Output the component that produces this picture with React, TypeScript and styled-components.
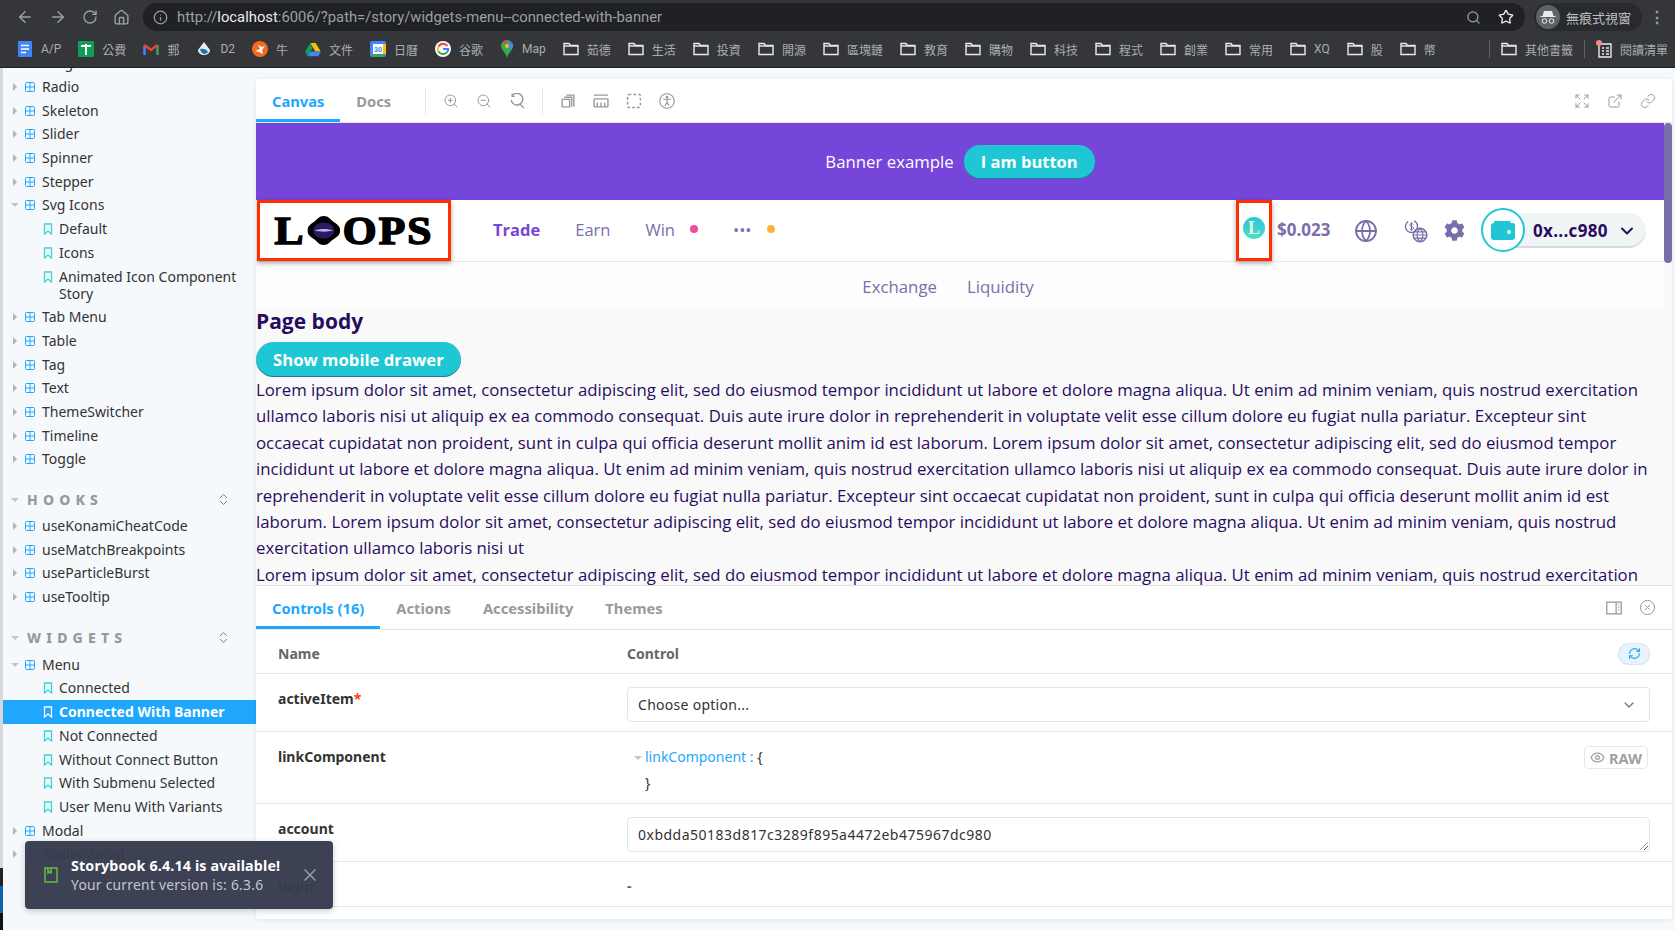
import React from 'react';
import styled, { createGlobalStyle } from 'styled-components';
import {
  ArrowLeft,
  ArrowRight,
  ChevronDown,
  ChevronsUpDown,
  CircleX,
  Expand,
  ExternalLink,
  Eye,
  Globe,
  Home,
  Info,
  Link as LinkIcon,
  RefreshCw,
  RotateCw,
  Search,
  Star,
  X,
  ZoomIn,
  ZoomOut,
} from 'lucide-react';
import { FaCog } from 'react-icons/fa';

const UI_FONT = `'Noto Sans', 'Open Sans', sans-serif`;
const PAGE_FONT = `'Open Sans', 'Noto Sans', sans-serif`;

const GlobalStyle = createGlobalStyle`
  html, body { margin: 0; padding: 0; height: 930px; overflow: hidden; background: #f6f9fc; }
  * { box-sizing: border-box; }
`;

const Page = styled.div`
  width: 1675px;
  height: 930px;
  display: flex;
  flex-direction: column;
  position: relative;
  overflow: hidden;
  font-family: ${UI_FONT};
`;

/* browser chrome */
const Chrome = styled.header`
  height: 68px;
  flex: none;
  background: #35363a;
  border-bottom: 1px solid #202124;
  color: #c4c7cb;
`;

const AddressRow = styled.div`
  height: 34px;
  display: flex;
  align-items: center;
  padding: 0 10px 0 16px;
`;

const NavIcons = styled.div`
  width: 127px;
  display: flex;
  align-items: center;
  gap: 15px;
  color: #9aa0a6;
`;

const UrlBar = styled.div`
  width: 1382px;
  height: 28px;
  border-radius: 14px;
  background: #202124;
  display: flex;
  align-items: center;
  gap: 7px;
  padding: 0 11px 0 10px;
  font-size: 13px;
  color: #9aa0a6;
`;

const UrlText = styled.span`
  flex: 1;
  padding-left: 2px;
  font-family: 'Roboto', sans-serif;
  font-size: 14.8px;
  b { color: #e8eaed; font-weight: 400; }
`;

const Incognito = styled.div`
  width: 108px;
  height: 28px;
  margin-left: 9px;
  border-radius: 14px;
  background: #292a2d;
  display: flex;
  align-items: center;
  gap: 6px;
  padding-left: 2px;
  font-size: 13px;
  color: #bdc1c6;
  font-family: 'Noto Sans CJK TC', sans-serif;
`;

const Dots = styled.span`
  margin-left: auto;
  color: #9aa0a6;
  font-size: 16px;
  font-weight: 700;
  line-height: 1;
`;

const BookmarkRow = styled.div`
  height: 33px;
  display: flex;
  align-items: center;
  padding: 0 7px 3px 17px;
  gap: 17px;
  font-family: 'Roboto', 'Noto Sans CJK TC', sans-serif;
  font-size: 12px;
  color: #a9adb2;
`;

const Bookmark = styled.span`
  display: inline-flex;
  align-items: center;
  gap: 8px;
  white-space: nowrap;
`;

const BookmarkEnd = styled.div`
  margin-left: auto;
  display: flex;
  align-items: center;
  gap: 11px;
`;

const BarDivider = styled.span`
  width: 1px;
  height: 18px;
  background: #5f6368;
`;

/* main area */
const Main = styled.div`
  flex: 1;
  min-height: 0;
  display: flex;
`;

const Strip = styled.div`
  width: 3px;
  flex: none;
  background: linear-gradient(#d8d8d8 0, #d8d8d8 800px, #222 800px, #222 818px, #0a66b0 818px, #0a66b0 845px, #111 845px);
`;

const Sidebar = styled.nav`
  width: 253px;
  flex: none;
  overflow: hidden;
  color: #333;
  font-size: 14px;
`;

const TreeList = styled.div`
  margin-top: -17px;
`;

const TreeRow = styled.div<{ $depth?: number; $active?: boolean }>`
  display: flex;
  align-items: flex-start;
  gap: 6px;
  padding: 3.35px 8px 3.35px ${p => (p.$depth ? 40 : 8)}px;
  line-height: 17px;
  background: ${p => (p.$active ? '#1ea7fd' : 'transparent')};
  color: ${p => (p.$active ? '#fff' : '#333')};
  font-weight: ${p => (p.$active ? 700 : 400)};
  svg { flex: none; margin-top: 3px; }
`;

const Caret = styled.span<{ $open?: boolean }>`
  width: 0;
  height: 0;
  flex: none;
  border-style: solid;
  border-color: transparent;
  ${p =>
    p.$open
      ? 'border-width: 4px 4px 0 4px; border-top-color: #c4c4c4; margin: 7px -1px 0 0;'
      : 'border-width: 4px 0 4px 4px; border-left-color: #b4b4b4; margin: 5px 1px 0 2px;'}
`;

const SectionHead = styled.div<{ $h: number }>`
  height: ${p => p.$h}px;
  margin-top: 15px;
  display: flex;
  align-items: center;
  gap: 6px;
  padding: 0 25px 0 8px;
  font-size: 14px;
  font-weight: 800;
  letter-spacing: 0.37em;
  color: #999;
  ${Caret} { margin: 0 2px 0 0; }
  svg { margin-left: auto; color: #777; }
`;

const Panel = styled.main`
  width: 1416px;
  height: 840px;
  margin-top: 11px;
  background: #fff;
  border-radius: 4px;
  box-shadow: 0 1px 5px rgba(0, 0, 0, 0.08);
  overflow: hidden;
  display: flex;
  flex-direction: column;
`;

const Toolbar = styled.div`
  height: 44px;
  flex: none;
  display: flex;
  align-items: stretch;
  border-bottom: 1px solid #e4e4e4;
  color: #999;
  font-size: 14.7px;
  font-weight: 700;
`;

const Tab = styled.span<{ $active?: boolean }>`
  display: flex;
  align-items: center;
  padding: 0 16px;
  color: ${p => (p.$active ? '#1ea7fd' : '#999')};
  box-shadow: ${p => (p.$active ? 'inset 0 -3px 0 #1ea7fd' : 'none')};
`;

const ToolGroup = styled.div<{ $push?: boolean; $first?: boolean }>`
  display: flex;
  align-items: center;
  gap: 17px;
  padding: 0 ${p => (p.$push ? 16 : 17)}px 0 ${p => (p.$first ? 18 : 17)}px;
  ${p => (p.$push ? 'margin-left: auto;' : '')}
`;

const ToolDivider = styled.span`
  width: 1px;
  height: 26px;
  align-self: center;
  background: #e6e6e6;
`;

/* story frame */
const Story = styled.section`
  height: 462px;
  flex: none;
  position: relative;
  overflow: hidden;
  padding-right: 8px;
  background: #faf9fa;
  font-family: ${PAGE_FONT};
  color: #280d5f;
`;

const Thumb = styled.div`
  position: absolute;
  top: 0;
  right: 0;
  width: 8px;
  height: 140px;
  border-radius: 4px;
  background: #7a6eaa;
`;

const Banner = styled.div`
  height: 77px;
  background: #7645d9;
  display: flex;
  align-items: center;
  justify-content: center;
  gap: 10px;
  color: #fff;
  font-size: 16.8px;
`;

const PillButton = styled.button<{ $wide?: boolean }>`
  border: 0;
  background: #1fc7d4;
  color: #fff;
  font-family: ${PAGE_FONT};
  font-weight: 700;
  font-size: ${p => (p.$wide ? 16.7 : 16.5)}px;
  height: ${p => (p.$wide ? 35 : 34)}px;
  padding: 0 17px;
  border-radius: ${p => (p.$wide ? 18 : 16)}px;
  box-shadow: inset 0 -1px 0 rgba(14, 14, 44, 0.4);
  ${p => (p.$wide ? 'display: block;' : '')}
`;

const MenuBar = styled.div`
  height: 62px;
  background: #fff;
  border-bottom: 1px solid #e9eaeb;
  display: flex;
  align-items: stretch;
  padding: 0 18px 0 1px;
`;

const RedBox = styled.div<{ $w: number }>`
  width: ${p => p.$w}px;
  flex: none;
  border: 3px solid #ff3000;
  box-shadow: 0 2px 5px rgba(0, 0, 0, 0.35);
  display: flex;
  align-items: center;
  justify-content: center;
  background: #fff;
`;

const Logo = styled.div`
  display: flex;
  align-items: center;
  gap: 2px;
  font-family: 'Liberation Serif', serif;
  font-size: 41px;
  font-weight: 700;
  line-height: 1;
  color: #000;
  -webkit-text-stroke: 1.6px #000;
  letter-spacing: 2px;
  transform: scaleX(1.06);
`;

const MenuLinks = styled.div`
  display: flex;
  align-items: center;
  margin-left: 42px;
  padding-bottom: 3px;
  font-size: 16.5px;
  color: #7a6eaa;
`;

const MenuLink = styled.span<{ $active?: boolean }>`
  margin-right: 35px;
  display: inline-flex;
  align-items: center;
  gap: 15px;
  color: ${p => (p.$active ? '#7645d9' : '#7a6eaa')};
  font-weight: ${p => (p.$active ? 700 : 400)};
`;

const Dot = styled.i<{ $color: string }>`
  width: 8px;
  height: 8px;
  border-radius: 50%;
  background: ${p => p.$color};
`;

const MenuRight = styled.div`
  margin-left: auto;
  display: flex;
  align-items: center;
  color: #7a6eaa;
  ${RedBox} { align-self: stretch; padding-bottom: 5px; }
`;

const TokenIcon = styled.span`
  width: 22px;
  height: 22px;
  border-radius: 50%;
  background: linear-gradient(#2ec4d6, #4ddccc);
  color: #dcfbd0;
  font-family: 'Liberation Serif', serif;
  font-weight: 700;
  font-size: 18px;
  line-height: 22px;
  text-align: center;
`;

const Price = styled.span`
  margin: 0 0 2px 5px;
  width: 77px;
  font-size: 17px;
  font-weight: 700;
`;

const Spacer = styled.span`
  width: 26px;
`;

const Gear = styled(FaCog)`
  margin-left: 16px;
`;

const WalletPill = styled.div`
  position: relative;
  margin-left: 16px;
  width: 165px;
  height: 35px;
  border-radius: 18px;
  background: #eff4f5;
  box-shadow: inset 0 -2px 0 rgba(0, 0, 0, 0.1);
  display: flex;
  align-items: center;
  padding-left: 52px;
  color: #280d5f;
  font-weight: 700;
  font-size: 17px;
  letter-spacing: 0.3px;
  gap: 9px;
`;

const WalletBadge = styled.span`
  position: absolute;
  left: 0;
  top: -5px;
  width: 44px;
  height: 44px;
  border-radius: 50%;
  background: #fff;
  border: 2px solid #1fc7d4;
  display: flex;
  align-items: center;
  justify-content: center;
`;

const SubMenu = styled.div`
  height: 47px;
  background: #fdfdfd;
  display: flex;
  align-items: center;
  justify-content: center;
  gap: 30px;
  padding: 2px 24px 0 0;
  color: #7a6eaa;
  font-size: 16.8px;
`;

const Heading = styled.h2`
  margin: 0;
  height: 33px;
  line-height: 24px;
  font-size: 21px;
  font-weight: 700;
`;

const BodyLines = styled.div`
  font-size: 16.8px;
  line-height: 26.4px;
`;

const BodyLine = styled.div`
  white-space: nowrap;
`;

/* addons panel */
const Addons = styled.section`
  flex: 1;
  min-height: 0;
  border-top: 1px solid #e0e0e0;
  background: #fff;
  color: #333;
  font-size: 14px;
`;

const Row = styled.div<{ $h: number }>`
  height: ${p => p.$h}px;
  display: grid;
  grid-template-columns: 349px 1fr;
  padding: 0 22px;
  border-bottom: 1px solid #e6e6e6;
`;

const ArgName = styled.div`
  font-weight: 700;
  padding-top: 14.5px;
  line-height: 20px;
  span { color: #ff4400; }
`;

const ColHead = styled.div`
  font-weight: 700;
  color: #666;
  line-height: 41px;
  padding-top: 3px;
  display: flex;
  justify-content: space-between;
  align-items: center;
`;

const ResetPill = styled.span`
  width: 32px;
  height: 22px;
  border-radius: 11px;
  background: #e8f3fc;
  box-shadow: inset 0 0 0 1px #d5e6f5;
  display: flex;
  align-items: center;
  justify-content: center;
  color: #1ea7fd;
`;

const Field = styled.div<{ $mono?: boolean }>`
  position: relative;
  margin-top: 13px;
  height: 35px;
  border: 1px solid #e4e4e4;
  border-radius: 4px;
  padding: 0 10px;
  display: flex;
  align-items: center;
  justify-content: space-between;
  color: #333;
  letter-spacing: ${p => (p.$mono ? '0.035em' : '0.02em')};
  svg { color: #777; margin-right: 2px; }
`;

const Grip = styled.i`
  position: absolute;
  right: 1px;
  bottom: 1px;
  width: 8px;
  height: 8px;
  background: repeating-linear-gradient(135deg, transparent 0 2px, #555 2px 3px);
  clip-path: polygon(100% 0, 100% 100%, 0 100%);
`;

const ObjectCell = styled.div`
  padding: 12px 0 0 7px;
  line-height: 26px;
  position: relative;
  ${Caret} { display: inline-block; vertical-align: middle; margin: 0 3px 0 0; }
  div { padding-left: 11px; }
  em { font-style: normal; color: #1ea7fd; }
`;

const RawButton = styled.span`
  position: absolute;
  right: 2px;
  top: 14px;
  height: 23px;
  width: 64px;
  border: 1px solid #e8e8e8;
  border-radius: 4px;
  display: flex;
  align-items: center;
  justify-content: center;
  gap: 4px;
  color: #a0a0a0;
  font-weight: 700;
  font-size: 14.5px;
  svg { color: #a0a0a0; }
`;

const Toast = styled.aside`
  position: absolute;
  left: 25px;
  top: 841px;
  width: 308px;
  height: 68px;
  border-radius: 4px;
  background: rgba(55, 59, 78, 0.97);
  box-shadow: 0 2px 6px rgba(0, 0, 0, 0.2);
  display: flex;
  align-items: center;
  padding: 0 13px 0 19px;
  gap: 13px;
  color: #fff;
  font-size: 14.3px;
  line-height: 19.5px;
  small { display: block; font-size: 13.8px; color: #c5c7cf; letter-spacing: 0.02em; }
  b { letter-spacing: 0.01em; }
  svg:last-child { margin-left: auto; color: #9599a6; }
`;

const Grid = () => (
  <svg width="12" height="12" viewBox="0 0 12 12" fill="none" stroke="#1ea7fd" strokeWidth="1">
    <rect x="1.5" y="1.5" width="9" height="9" rx="1" />
    <path d="M6 1.5v9M1.5 6h9" />
  </svg>
);

const Mark = ({ white }: { white?: boolean }) => (
  <svg width="10" height="12" viewBox="0 0 10 12" fill="none" stroke={white ? '#fff' : '#37d5d3'} strokeWidth="1.3">
    <path d="M1.5 1h7v10L5 8 1.5 11z" />
  </svg>
);

const Folder = () => (
  <svg width="16" height="14" viewBox="0 0 16 14" fill="none" stroke="#e8eaed" strokeWidth="1.4">
    <path d="M1 12.5V1.5h5l1.5 2H15v9z" />
    <path d="M1 4h14" />
  </svg>
);

const Viewport = () => (
  <svg width="16" height="16" viewBox="0 0 15 15" fill="none" stroke="#999" strokeWidth="1.3">
    <path d="M2 13V6h7v7zM4 4h7v9M6 2h7v11" />
  </svg>
);

const Ruler = () => (
  <svg width="16" height="16" viewBox="0 0 15 15" fill="none" stroke="#999" strokeWidth="1.3">
    <path d="M1 2h13M1 5.5h13M1 13h13M1 5.5V13M14 5.5V13M4 9v4M7.5 9v4M11 9v4" />
  </svg>
);

const Outline = () => (
  <svg width="16" height="16" viewBox="0 0 15 15" fill="none" stroke="#999" strokeWidth="1.4" strokeDasharray="2.5 2">
    <rect x="1.5" y="1.5" width="12" height="12" rx="1" />
  </svg>
);

const A11y = () => (
  <svg width="16" height="16" viewBox="0 0 15 15" fill="none" stroke="#999" strokeWidth="1.1">
    <circle cx="7.5" cy="7.5" r="6.8" />
    <circle cx="7.5" cy="4" r=".8" fill="#999" />
    <path d="M3.8 5.6l3.7.7 3.7-.7M7.5 6.3v2.5L5.6 12M7.5 8.8l1.9 3.2" />
  </svg>
);

const ZoomReset = () => (
  <svg width="16" height="16" viewBox="0 0 15 15" fill="none" stroke="#999" strokeWidth="1.3">
    <path d="M3 2.500A5.500 5.500 0 1 1 2 6.500M3 .8v2.400h2.400M10.500 10.500L14 14" />
  </svg>
);

const PanelToggle = () => (
  <svg width="16" height="14" viewBox="0 0 15 13" fill="none" stroke="#999" strokeWidth="1.2">
    <rect x=".7" y="1" width="13.6" height="11" />
    <path d="M9.500 1v11M11.500 3.500h1M11.500 6h1M11.500 8.500h1" />
  </svg>
);

const MoneyGlobe = () => (
  <svg width="24" height="24" viewBox="0 0 24 24" fill="none" stroke="#7a6eaa" strokeWidth="1.4">
    <circle cx="7.500" cy="7.500" r="6" strokeDasharray="24 6" />
    <path d="M9.500 5.300C8 4 5.600 4.700 5.800 6.300c.2 1.700 3.600.9 3.800 2.600.2 1.600-2.400 2.200-4 1M7.500 3v9" strokeWidth="1" />
    <circle cx="16" cy="16" r="6.800" strokeWidth="1.500" />
    <path d="M9.300 16h13.400M16 9.200c-4 4-4 9.600 0 13.600M16 9.200c4 4 4 9.600 0 13.600M10.500 12.800h11M10.500 19.200h11" strokeWidth="1.200" />
  </svg>
);

const WalletGlyph = () => (
  <svg width="24" height="22" viewBox="0 0 24 22">
    <path d="M3 2h15a2 2 0 0 1 2 2H3z" fill="#1fc7d4" />
    <path d="M0 6a3 3 0 0 1 3-2h19a2 2 0 0 1 2 2v12a3 3 0 0 1-3 3H3a3 3 0 0 1-3-3z" fill="#1fc7d4" />
    <circle cx="18" cy="13" r="2" fill="#fff" />
  </svg>
);

const LogoMark = () => (
  <svg width="31" height="29" viewBox="0 0 31 29">
    <path d="M15.500 0C20 0 21 3 25 6s6 5 6 8.500-2 6-6 8.500-5 6-9.500 6-5.500-3-9.500-6-6-5-6-8.500 2-5.500 6-8.500S11 0 15.500 0z" fill="#000" />
    <ellipse cx="15.500" cy="14.500" rx="10" ry="8" fill="#2b1a63" />
    <path d="M7 14.500c4-2 13-2 17 0-4 1.500-13 1.500-17 0z" fill="#b9b0e6" />
  </svg>
);

const IncognitoGlyph = () => (
  <svg width="24" height="24" viewBox="0 0 24 24">
    <circle cx="12" cy="12" r="12" fill="#5f6368" />
    <path d="M8 6h8l1.500 5h2v1h-15v-1h2z" fill="#e8eaed" />
    <circle cx="8.500" cy="16" r="2.300" fill="none" stroke="#e8eaed" />
    <circle cx="15.500" cy="16" r="2.300" fill="none" stroke="#e8eaed" />
  </svg>
);

const colored: Record<string, React.ReactNode> = {
  docs: (
    <svg width="16" height="16" viewBox="0 0 16 16">
      <rect x="1" width="14" height="16" rx="1" fill="#4285f4" />
      <path d="M4 4.500h8M4 8h8M4 11.500h5" stroke="#fff" strokeWidth="1.500" />
    </svg>
  ),
  sheet: (
    <svg width="16" height="16" viewBox="0 0 16 16">
      <rect width="16" height="16" rx="1" fill="#0f9d58" />
      <path d="M3 5h10M8 3v11" stroke="#fff" strokeWidth="2" />
    </svg>
  ),
  gmail: (
    <svg width="16" height="14" viewBox="0 0 16 14" fill="none" strokeWidth="2.500">
      <path d="M1.500 13V3" stroke="#4285f4" />
      <path d="M14.500 13V3" stroke="#34a853" />
      <path d="M1.500 3L8 8l6.500-5" stroke="#ea4335" />
    </svg>
  ),
  d2: (
    <svg width="16" height="16" viewBox="0 0 16 16">
      <path d="M8 1l6 8c0 3-3 5-6 5S2 12 2 9z" fill="#e8eaed" />
      <path d="M4 8c3-1 7 0 8 3-2 3-7 3-8-3z" fill="#1a73b8" />
    </svg>
  ),
  cow: (
    <svg width="16" height="16" viewBox="0 0 16 16">
      <circle cx="8" cy="8" r="8" fill="#f26b21" />
      <path d="M3 10l5-2-2-4 4 2 3-1-3 4 1 4-4-2z" fill="#fff" />
    </svg>
  ),
  drive: (
    <svg width="16" height="15" viewBox="0 0 16 15">
      <path d="M5.300 1h5.400l5 8.500h-5.400z" fill="#fbbc04" />
      <path d="M5.300 1L0 9.500l2.700 4.700L8 5.500z" fill="#0f9d58" />
      <path d="M2.700 14.200h10.600l2.700-4.700H5.400z" fill="#4285f4" />
    </svg>
  ),
  cal: (
    <svg width="16" height="16" viewBox="0 0 16 16">
      <rect width="16" height="16" rx="2" fill="#4285f4" />
      <rect x="3" y="3" width="10" height="10" fill="#fff" />
      <rect x="13" y="3" width="3" height="10" fill="#fbbc04" />
      <rect x="3" y="13" width="10" height="3" fill="#34a853" />
      <text x="8" y="11" fontSize="7" fontWeight="700" textAnchor="middle" fill="#4285f4">30</text>
    </svg>
  ),
  google: (
    <svg width="16" height="16" viewBox="0 0 16 16">
      <circle cx="8" cy="8" r="8" fill="#fff" />
      <path d="M12.500 5A5.200 5.200 0 0 0 3.500 5.500" fill="none" stroke="#ea4335" strokeWidth="2" />
      <path d="M3.500 5.500a5.200 5.200 0 0 0 0 5" fill="none" stroke="#fbbc04" strokeWidth="2" />
      <path d="M3.500 10.500a5.200 5.200 0 0 0 8.500.7" fill="none" stroke="#34a853" strokeWidth="2" />
      <path d="M12 11.200c1-1 1.300-2 1.200-3.200H8" fill="none" stroke="#4285f4" strokeWidth="2" />
    </svg>
  ),
  map: (
    <svg width="14" height="18" viewBox="0 0 14 18">
      <path d="M7 0a6 6 0 0 1 6 6c0 4-5 7-6 12C6 13 1 10 1 6a6 6 0 0 1 6-6z" fill="#34a853" />
      <path d="M3 2L11 10c1-1.500 2-2.500 2-4 0-1.200-.3-2-.8-3z" fill="#4285f4" />
      <path d="M7 0a6 6 0 0 0-4.500 2l2.500 2.500z" fill="#ea4335" />
      <circle cx="7" cy="6" r="2" fill="#fbbc04" />
    </svg>
  ),
  read: (
    <svg width="16" height="18" viewBox="0 0 16 18">
      <path d="M3 4h12v13H3zM6 8h2M10 8h3M6 11h2M10 11h3M6 14h2M10 14h3" fill="none" stroke="#e8eaed" strokeWidth="1.400" />
      <circle cx="3" cy="3" r="3" fill="#f28b82" />
    </svg>
  ),
};

const bookmarks: [string, string][] = [
  ['docs', 'A/P'],
  ['sheet', '公費'],
  ['gmail', '郵'],
  ['d2', 'D2'],
  ['cow', '牛'],
  ['drive', '文件'],
  ['cal', '日曆'],
  ['google', '谷歌'],
  ['map', 'Map'],
];

const folders = ['茹德', '生活', '投資', '開源', '區塊鏈', '教育', '購物', '科技', '程式', '創業', '常用', 'XQ', '股', '幣'];

type Item = { name: string; depth?: number; open?: boolean; active?: boolean };

const components: Item[] = [
  { name: 'Progress' },
  { name: 'Radio' },
  { name: 'Skeleton' },
  { name: 'Slider' },
  { name: 'Spinner' },
  { name: 'Stepper' },
  { name: 'Svg Icons', open: true },
  { name: 'Default', depth: 1 },
  { name: 'Icons', depth: 1 },
  { name: 'Animated Icon Component Story', depth: 1 },
  { name: 'Tab Menu' },
  { name: 'Table' },
  { name: 'Tag' },
  { name: 'Text' },
  { name: 'ThemeSwitcher' },
  { name: 'Timeline' },
  { name: 'Toggle' },
];

const hooks: Item[] = [
  { name: 'useKonamiCheatCode' },
  { name: 'useMatchBreakpoints' },
  { name: 'useParticleBurst' },
  { name: 'useTooltip' },
];

const widgets: Item[] = [
  { name: 'Menu', open: true },
  { name: 'Connected', depth: 1 },
  { name: 'Connected With Banner', depth: 1, active: true },
  { name: 'Not Connected', depth: 1 },
  { name: 'Without Connect Button', depth: 1 },
  { name: 'With Submenu Selected', depth: 1 },
  { name: 'User Menu With Variants', depth: 1 },
  { name: 'Modal' },
  { name: 'WalletModal' },
];

const lorem = [
  'Lorem ipsum dolor sit amet, consectetur adipiscing elit, sed do eiusmod tempor incididunt ut labore et dolore magna aliqua. Ut enim ad minim veniam, quis nostrud exercitation',
  'ullamco laboris nisi ut aliquip ex ea commodo consequat. Duis aute irure dolor in reprehenderit in voluptate velit esse cillum dolore eu fugiat nulla pariatur. Excepteur sint',
  'occaecat cupidatat non proident, sunt in culpa qui officia deserunt mollit anim id est laborum. Lorem ipsum dolor sit amet, consectetur adipiscing elit, sed do eiusmod tempor',
  'incididunt ut labore et dolore magna aliqua. Ut enim ad minim veniam, quis nostrud exercitation ullamco laboris nisi ut aliquip ex ea commodo consequat. Duis aute irure dolor in',
  'reprehenderit in voluptate velit esse cillum dolore eu fugiat nulla pariatur. Excepteur sint occaecat cupidatat non proident, sunt in culpa qui officia deserunt mollit anim id est',
  'laborum. Lorem ipsum dolor sit amet, consectetur adipiscing elit, sed do eiusmod tempor incididunt ut labore et dolore magna aliqua. Ut enim ad minim veniam, quis nostrud',
  'exercitation ullamco laboris nisi ut',
  'Lorem ipsum dolor sit amet, consectetur adipiscing elit, sed do eiusmod tempor incididunt ut labore et dolore magna aliqua. Ut enim ad minim veniam, quis nostrud exercitation',
];

function Tree({ items }: { items: Item[] }) {
  return (
    <>
      {items.map(item => (
        <TreeRow key={item.name} $depth={item.depth} $active={item.active}>
          {item.depth ? <Mark white={item.active} /> : <Caret $open={item.open} />}
          {!item.depth && <Grid />}
          <span>{item.name}</span>
        </TreeRow>
      ))}
    </>
  );
}

export default function App() {
  return (
    <Page>
      <GlobalStyle />
      <Chrome>
        <AddressRow>
          <NavIcons>
            <ArrowLeft size={18} />
            <ArrowRight size={18} />
            <RotateCw size={16} />
            <Home size={17} />
          </NavIcons>
          <UrlBar>
            <Info size={15} />
            <UrlText>
              http://<b>localhost</b>:6006/?path=/story/widgets-menu--connected-with-banner
            </UrlText>
            <Search size={15} />
            <Star size={16} color="#e8eaed" style={{ marginLeft: 10 }} />
          </UrlBar>
          <Incognito>
            <IncognitoGlyph />
            無痕式視窗
          </Incognito>
          <Dots>⋮</Dots>
        </AddressRow>
        <BookmarkRow>
          {bookmarks.map(([icon, label]) => (
            <Bookmark key={label}>
              {colored[icon]}
              {label}
            </Bookmark>
          ))}
          {folders.map(label => (
            <Bookmark key={label}>
              <Folder />
              {label}
            </Bookmark>
          ))}
          <BookmarkEnd>
            <BarDivider />
            <Bookmark>
              <Folder />
              其他書籤
            </Bookmark>
            <BarDivider />
            <Bookmark>
              {colored.read}
              閱讀清單
            </Bookmark>
          </BookmarkEnd>
        </BookmarkRow>
      </Chrome>

      <Main>
        <Strip />
        <Sidebar>
          <TreeList>
            <Tree items={components} />
            <SectionHead $h={28}>
              <Caret $open />
              HOOKS
              <ChevronsUpDown size={15} strokeWidth={1.5} />
            </SectionHead>
            <Tree items={hooks} />
            <SectionHead $h={29}>
              <Caret $open />
              WIDGETS
              <ChevronsUpDown size={15} strokeWidth={1.5} />
            </SectionHead>
            <Tree items={widgets} />
          </TreeList>
        </Sidebar>

        <Panel>
          <Toolbar>
            <Tab $active>Canvas</Tab>
            <Tab>Docs</Tab>
            <ToolGroup $first>
              <ToolDivider />
              <ZoomIn size={16} strokeWidth={1.5} />
              <ZoomOut size={16} strokeWidth={1.5} />
              <ZoomReset />
            </ToolGroup>
            <ToolDivider />
            <ToolGroup>
              <Viewport />
              <Ruler />
              <Outline />
              <A11y />
            </ToolGroup>
            <ToolGroup $push>
              <Expand size={16} strokeWidth={1.5} />
              <ExternalLink size={16} strokeWidth={1.5} />
              <LinkIcon size={16} strokeWidth={1.5} />
            </ToolGroup>
          </Toolbar>

          <Story>
            <Thumb />
            <Banner>
              Banner example
              <PillButton>I am button</PillButton>
            </Banner>
            <MenuBar>
              <RedBox $w={194}>
                <Logo>
                  L
                  <LogoMark />
                  OPS
                </Logo>
              </RedBox>
              <MenuLinks>
                <MenuLink $active>Trade</MenuLink>
                <MenuLink>Earn</MenuLink>
                <MenuLink>
                  Win <Dot $color="#ed4b9e" />
                </MenuLink>
                <MenuLink>
                  •••
                  <Dot $color="#ffb237" />
                </MenuLink>
              </MenuLinks>
              <MenuRight>
                <RedBox $w={36}>
                  <TokenIcon>L</TokenIcon>
                </RedBox>
                <Price>$0.023</Price>
                <Globe size={24} strokeWidth={1.8} />
                <Spacer />
                <MoneyGlobe />
                <Gear size={21} />
                <WalletPill>
                  <WalletBadge>
                    <WalletGlyph />
                  </WalletBadge>
                  0x...c980
                  <ChevronDown size={20} strokeWidth={2.4} />
                </WalletPill>
              </MenuRight>
            </MenuBar>
            <SubMenu>
              <span>Exchange</span>
              <span>Liquidity</span>
            </SubMenu>
            <Heading>Page body</Heading>
            <PillButton $wide>Show mobile drawer</PillButton>
            <BodyLines>
              {lorem.map((line, i) => (
                <BodyLine key={i}>{line}</BodyLine>
              ))}
            </BodyLines>
          </Story>

          <Addons>
            <Toolbar>
              <Tab $active>Controls (16)</Tab>
              <Tab>Actions</Tab>
              <Tab>Accessibility</Tab>
              <Tab>Themes</Tab>
              <ToolGroup $push>
                <PanelToggle />
                <CircleX size={17} strokeWidth={1.4} />
              </ToolGroup>
            </Toolbar>
            <Row $h={44}>
              <ColHead>Name</ColHead>
              <ColHead>
                Control
                <ResetPill>
                  <RefreshCw size={13} />
                </ResetPill>
              </ColHead>
            </Row>
            <Row $h={58}>
              <ArgName>
                activeItem<span>*</span>
              </ArgName>
              <Field>
                Choose option...
                <ChevronDown size={16} />
              </Field>
            </Row>
            <Row $h={72}>
              <ArgName>linkComponent</ArgName>
              <ObjectCell>
                <Caret $open />
                <em>linkComponent :</em> {'{'}
                <div>{'}'}</div>
                <RawButton>
                  <Eye size={15} />
                  RAW
                </RawButton>
              </ObjectCell>
            </Row>
            <Row $h={58}>
              <ArgName>account</ArgName>
              <Field $mono>
                0xbdda50183d817c3289f895a4472eb475967dc980
                <Grip />
              </Field>
            </Row>
            <Row $h={45}>
              <ArgName>login</ArgName>
              <ColHead>-</ColHead>
            </Row>
          </Addons>
        </Panel>
      </Main>

      <Toast>
        <svg width="14" height="16" viewBox="0 0 14 16" fill="none" stroke="#66bf3c" strokeWidth="1.500">
          <path d="M1 1h12v14H1zM4 1v5l1.500-1L7 6V1" />
        </svg>
        <div>
          <b>Storybook 6.4.14 is available!</b>
          <small>Your current version is: 6.3.6</small>
        </div>
        <X size={20} />
      </Toast>
    </Page>
  );
}
